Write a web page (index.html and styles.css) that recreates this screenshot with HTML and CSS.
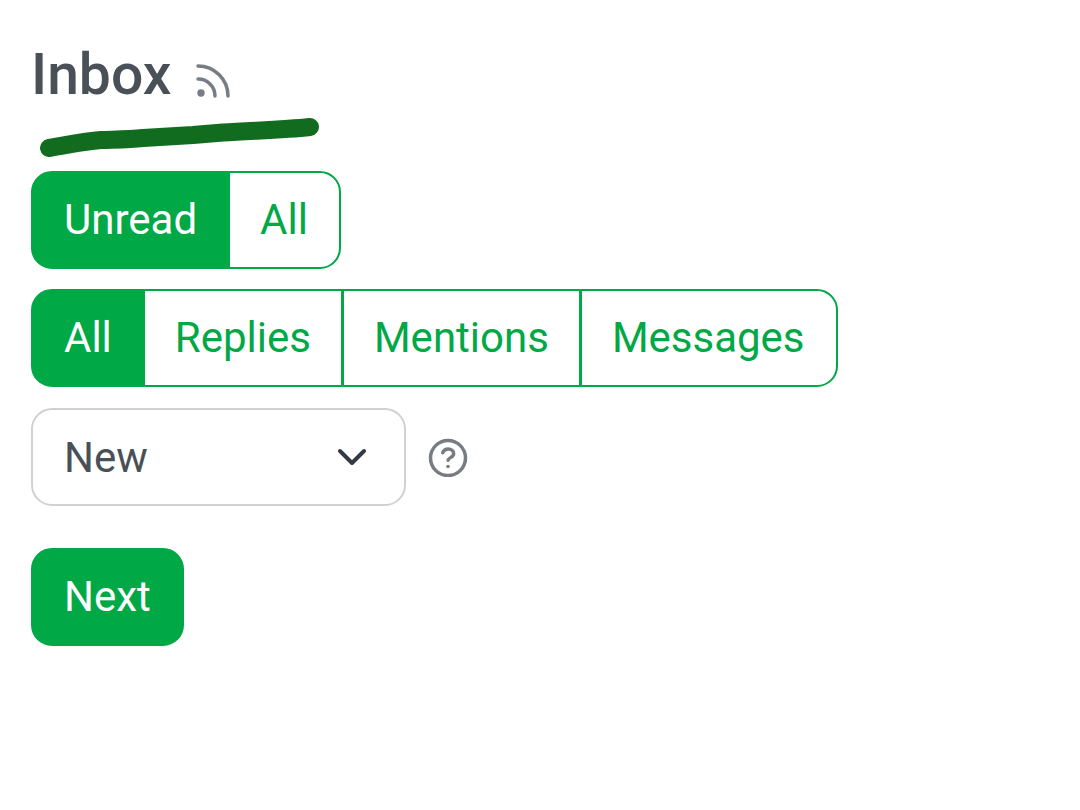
FILE: index.html
```html
<!DOCTYPE html>
<html lang="en">
  <head>
    <meta charset="utf-8">
    <meta name="viewport" content="width=device-width, initial-scale=1">
    <title>Inbox</title>
    <link rel="stylesheet" href="styles.css">
  </head>
  <body>
    <main class="inbox">
      <header class="inbox-header">
        <h1>Inbox</h1>
        <a href="#" class="icon-link" title="RSS" aria-label="RSS">
          <svg class="icon-rss" viewBox="0 0 36 36">
            <path d="M3 4A30 30 0 0 1 33 34M3 17A17 17 0 0 1 20 34" />
            <circle cx="6" cy="31" r="3.7" />
          </svg>
        </a>
      </header>

      <svg class="underline" viewBox="0 0 290 46" aria-hidden="true">
        <path d="M18 33C35 30.500 50 26.500 70 25C82 24.500 98 24.500 112 23L162 20L192 17.500C220 15.500 252 15 279 12" />
      </svg>

      <form>
        <!-- Read status -->
        <div class="btn-group" role="group" aria-label="Status">
          <input type="radio" class="btn-check" name="status" id="status-unread" checked>
          <label class="btn btn-outline" for="status-unread">Unread</label>
          <input type="radio" class="btn-check" name="status" id="status-all">
          <label class="btn btn-outline" for="status-all">All</label>
        </div>

        <!-- Message type -->
        <div class="btn-group" role="group" aria-label="Type">
          <input type="radio" class="btn-check" name="type" id="type-all" checked>
          <label class="btn btn-outline" for="type-all">All</label>
          <input type="radio" class="btn-check" name="type" id="type-replies">
          <label class="btn btn-outline" for="type-replies">Replies</label>
          <input type="radio" class="btn-check" name="type" id="type-mentions">
          <label class="btn btn-outline" for="type-mentions">Mentions</label>
          <input type="radio" class="btn-check" name="type" id="type-messages">
          <label class="btn btn-outline" for="type-messages">Messages</label>
        </div>

        <div class="sort-row">
          <div class="select-wrap">
            <select class="sort-select" id="sort" aria-label="Sort">
              <option>New</option>
              <option>Old</option>
              <option>Hot</option>
            </select>
            <svg class="chevron" viewBox="0 0 32 20">
              <path d="M4 4L16 16L28 4" />
            </svg>
          </div>
          <a href="#" class="icon-link" title="Sorting help" aria-label="Sorting help">
            <svg class="icon-help" viewBox="0 0 40 40">
              <circle cx="20" cy="21" r="17.500" />
              <path d="M14.700 15.700C15.700 13 18 12 20.300 12C23.300 12 25.700 14 25.700 16.700C25.700 20.300 20.300 20.700 20 23.300" />
              <circle class="dot" cx="20" cy="29.500" r="1.800" />
            </svg>
          </a>
        </div>

        <button type="button" class="btn btn-primary">Next</button>
      </form>
    </main>
  </body>
</html>
```

FILE: styles.css
```css
* {
  box-sizing: border-box;
}

body {
  margin: 0;
  font-family: Roboto, "Liberation Sans", sans-serif;
  font-size: 42px;
  line-height: 62px;
  color: #495057;
  background-color: #ffffff;
}

.inbox {
  padding: 40px 31px;
}

.inbox-header {
  display: flex;
  align-items: center;
  gap: 24px;
}

h1 {
  margin: 0;
  font-size: 57px;
  line-height: 70px;
  font-weight: 500;
}

.icon-link {
  display: flex;
  color: #777d82;
}

.icon-link svg {
  fill: none;
  stroke: currentColor;
  stroke-width: 3.5;
  stroke-linecap: round;
}

.icon-rss {
  width: 36px;
  height: 36px;
  margin-top: 10px;
}

.icon-link .icon-rss circle,
.icon-link .dot {
  fill: currentColor;
  stroke: none;
}

.underline {
  display: block;
  width: 290px;
  height: 46px;
  margin: 5px 0 10px;
  fill: none;
  stroke: #116c20;
  stroke-width: 18;
  stroke-linecap: round;
  stroke-linejoin: round;
}

/* Buttons */
.btn {
  display: inline-block;
  padding: 16px 31px;
  border: 2px solid #00a846;
  border-radius: 21px;
  font-family: inherit;
  font-size: 42px;
  line-height: 62px;
  cursor: pointer;
}

.btn-primary {
  display: block;
  color: #ffffff;
  background-color: #00a846;
}

.btn-outline {
  color: #00a846;
}

.btn-group {
  display: flex;
  width: fit-content;
  position: relative;
  margin-bottom: 20px;
}

.btn-check {
  position: absolute;
  opacity: 0;
  pointer-events: none;
}

.btn-check:checked + .btn {
  color: #ffffff;
  background-color: #00a846;
}

.btn-check:focus-visible + .btn {
  outline: 4px solid #99dcb5;
}

.btn-group .btn:not(:last-child) {
  border-top-right-radius: 0;
  border-bottom-right-radius: 0;
}

.btn-group .btn:not(:first-of-type) {
  margin-left: -3px;
  border-top-left-radius: 0;
  border-bottom-left-radius: 0;
}

/* the selected button covers the shared edge */
.btn-group .btn-check:checked + .btn {
  z-index: 1;
}

/* Sort */
.sort-row {
  display: flex;
  align-items: center;
  gap: 22px;
  margin: 21px 0 42px;
}

.select-wrap {
  position: relative;
}

.sort-select {
  display: block;
  width: 375px;
  height: 98px;
  padding: 0 96px 0 31px;
  border: 2px solid #d0d1d2;
  border-radius: 21px;
  appearance: none;
  font-family: inherit;
  font-size: 42px;
  color: #495057;
  background-color: #ffffff;
}

.chevron {
  position: absolute;
  top: 39px;
  right: 38px;
  width: 32px;
  height: 20px;
  fill: none;
  stroke: #343a44;
  stroke-width: 4;
  stroke-linecap: round;
  stroke-linejoin: round;
  pointer-events: none;
}

.icon-help {
  width: 40px;
  height: 40px;
}
```
